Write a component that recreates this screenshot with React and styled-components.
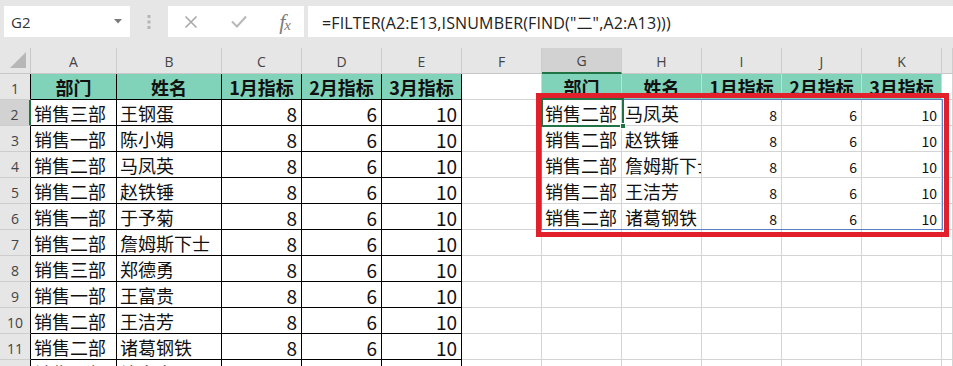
import React from "react";
import styled, { createGlobalStyle, css } from "styled-components";

const GlobalStyle = createGlobalStyle`
  html, body {
    margin: 0;
    padding: 0;
    width: 953px;
    height: 366px;
    overflow: hidden;
    background: #ffffff;
    font-family: "Noto Sans CJK SC", "Noto Sans", sans-serif;
  }
  * { box-sizing: border-box; }
`;

const LETTERS = ["A", "B", "C", "D", "E", "F", "G", "H", "I", "J", "K", ""];
const HEAD = ["部门", "姓名", "1月指标", "2月指标", "3月指标"];

const SOURCE = [
  ["销售三部", "王钢蛋"],
  ["销售一部", "陈小娟"],
  ["销售二部", "马凤英"],
  ["销售二部", "赵铁锤"],
  ["销售一部", "于予菊"],
  ["销售二部", "詹姆斯下士"],
  ["销售三部", "郑德勇"],
  ["销售一部", "王富贵"],
  ["销售二部", "王洁芳"],
  ["销售二部", "诸葛钢铁"],
  ["销售一部", "钱多多"],
];

// 二部만 걸러낸 결과
const FILTERED = SOURCE.filter((r) => r[0].includes("二"));

const App = () => {
  const rows = [];
  for (let r = 1; r <= 12; r++) {
    const src = r === 1 ? HEAD : [...SOURCE[r - 2], 8, 6, 10];
    const out =
      r === 1 ? HEAD : r - 2 < FILTERED.length ? [...FILTERED[r - 2], 8, 6, 10] : null;
    rows.push(
      <React.Fragment key={r}>
        <RowHead $active={r === 2} $boxed>
          {r}
        </RowHead>
        {src.map((v, i) => (
          <Cell
            key={`s${i}`}
            $boxed
            $head={r === 1}
            $num={r > 1 && i > 1}
          >
            {v}
          </Cell>
        ))}
        <Cell />
        {out
          ? out.map((v, i) => (
              <Cell
                key={`o${i}`}
                $head={r === 1}
                $num={r > 1 && i > 1}
                $small={r > 1 && i > 1}
              >
                {v}
              </Cell>
            ))
          : [0, 1, 2, 3, 4].map((i) => <Cell key={`e${i}`} />)}
        <Cell />
      </React.Fragment>
    );
  }

  return (
    <>
      <GlobalStyle />
      <Toolbar>
        <NameBox>
          <NameText>G2</NameText>
          <svg width="8" height="5" viewBox="0 0 8 5">
            <path d="M0 0 L8 0 L4 4.5 Z" fill="#7a7a7a" />
          </svg>
        </NameBox>
        <Grip>
          <svg width="4" height="16" viewBox="0 0 4 16">
            <rect x="0.5" y="1" width="3" height="3" fill="#b5b5b5" />
            <rect x="0.5" y="6.5" width="3" height="3" fill="#b5b5b5" />
            <rect x="0.5" y="12" width="3" height="3" fill="#b5b5b5" />
          </svg>
        </Grip>
        <FxButtons>
          <svg width="14" height="14" viewBox="0 0 14 14">
            <path d="M1.5 1.5 L12.5 12.5 M12.5 1.5 L1.5 12.5" stroke="#a8a8a8" strokeWidth="1.6" />
          </svg>
          <svg width="16" height="13" viewBox="0 0 16 13">
            <path d="M1 6.5 L6 11.5 L15 1.5" stroke="#b8b8b8" strokeWidth="2" fill="none" />
          </svg>
          <FxMark>
            f<sub>x</sub>
          </FxMark>
        </FxButtons>
        <FormulaBox>=FILTER(A2:E13,ISNUMBER(FIND("二",A2:A13)))</FormulaBox>
      </Toolbar>

      <Viewport>
        <Sheet>
          <Corner>
            <svg width="18" height="18" viewBox="0 0 18 18">
              <path d="M17 1 L17 17 L1 17 Z" fill="#b7b7b7" />
            </svg>
          </Corner>
          {LETTERS.map((l, i) => (
            <ColHead key={i} $active={l === "G"}>
              {l}
            </ColHead>
          ))}
          {rows}

          <SpillFrame />
          <Selection>
            <FillHandle />
          </Selection>
          <RedMark />
        </Sheet>
      </Viewport>
    </>
  );
};

export default App;

const Toolbar = styled.div`
  height: 48px;
  background: #e6e6e6;
  display: flex;
  align-items: flex-start;
  padding: 6px 0 0 4px;
`;

const NameBox = styled.div`
  width: 126px;
  height: 31px;
  background: #fff;
  display: flex;
  align-items: center;
  justify-content: space-between;
  padding: 0 8px 0 7px;
`;

const NameText = styled.span`
  font-family: "Open Sans", "Noto Sans", sans-serif;
  font-size: 15px;
  color: #333;
`;

const Grip = styled.div`
  width: 38px;
  height: 31px;
  display: flex;
  align-items: center;
  justify-content: center;
`;

const FxButtons = styled.div`
  width: 136px;
  height: 31px;
  background: #fff;
  display: flex;
  align-items: center;
  justify-content: space-between;
  padding: 0 14px 0 16px;
`;

const FxMark = styled.span`
  font-family: "Liberation Serif", serif;
  font-style: italic;
  font-size: 22px;
  color: #7d7d7d;
  line-height: 1;
  letter-spacing: -1px;
  sub {
    font-size: 15px;
    vertical-align: -1px;
  }
`;

const FormulaBox = styled.div`
  flex: 1;
  height: 31px;
  margin-left: 4px;
  background: #fff;
  display: flex;
  align-items: center;
  padding-left: 14px;
  font-family: "Open Sans", "Noto Sans CJK SC", sans-serif;
  font-size: 16px;
  letter-spacing: 0.15px;
  color: #222;
  white-space: nowrap;
`;

const Viewport = styled.div`
  height: 318px;
  overflow: hidden;
`;

const Sheet = styled.div`
  position: relative;
  display: grid;
  grid-template-columns: 31px 86px 105px repeat(9, 80px) 1fr;
  grid-auto-rows: 26px;
`;

const headBase = css`
  background: #e6e6e6;
  color: #444;
  font-family: "Open Sans", "Noto Sans", sans-serif;
  font-size: 14px;
  display: flex;
  align-items: center;
  justify-content: center;
`;

const Corner = styled.div`
  ${headBase};
  border-right: 1px solid #c8c8c8;
  border-bottom: 1px solid #c8c8c8;
  justify-content: flex-end;
  align-items: flex-end;
  padding: 0 3px 4px 0;
`;

const ColHead = styled.div`
  ${headBase};
  border-right: 1px solid #cdcdcd;
  border-bottom: ${(p) => (p.$active ? "2px solid #217346" : "1px solid #c8c8c8")};
  background: ${(p) => (p.$active ? "#d2d2d2" : "#e6e6e6")};
  padding-top: 1px;
`;

const RowHead = styled.div`
  ${headBase};
  background: ${(p) => (p.$active ? "#d2d2d2" : "#e6e6e6")};
  border-bottom: 1px solid #cdcdcd;
  border-right: ${(p) =>
    p.$active ? "2px solid #217346" : p.$boxed ? "1px solid #000" : "1px solid #c8c8c8"};
  padding-top: 3px;
`;

const Cell = styled.div`
  display: flex;
  align-items: center;
  overflow: hidden;
  white-space: nowrap;
  padding: 1px 3px 0 3px;
  font-size: 18px;
  color: #111;
  border-right: 1px solid ${(p) => (p.$boxed ? "#000" : "#d4d4d4")};
  border-bottom: 1px solid ${(p) => (p.$boxed ? "#000" : "#d4d4d4")};
  justify-content: ${(p) => (p.$num ? "flex-end" : "flex-start")};
  ${(p) =>
    p.$num &&
    css`
      font-size: 19px;
      padding-right: 4px;
    `}
  ${(p) =>
    p.$small &&
    css`
      font-size: 14px;
      padding-top: 4px;
    `}
  ${(p) =>
    p.$head &&
    css`
      background: #80d2b8;
      font-weight: 700;
      justify-content: center;
      color: #111;
    `}
`;

const SpillFrame = styled.div`
  position: absolute;
  left: 541px;
  top: 51px;
  width: 402px;
  height: 131px;
  border: 1px solid #5b7fc4;
  pointer-events: none;
`;

const Selection = styled.div`
  position: absolute;
  left: 541px;
  top: 50px;
  width: 83px;
  height: 29px;
  border: 2px solid #217346;
`;

const FillHandle = styled.div`
  position: absolute;
  right: -4px;
  bottom: -4px;
  width: 6px;
  height: 6px;
  background: #217346;
  border: 1px solid #fff;
`;

const RedMark = styled.div`
  position: absolute;
  left: 536px;
  top: 45px;
  width: 413px;
  height: 144px;
  border: 5px solid #e2202b;
`;
